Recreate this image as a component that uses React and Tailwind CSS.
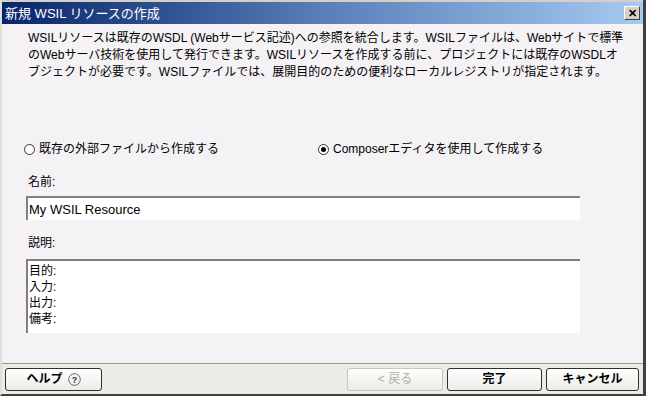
import React, { useState } from "react";

const jp = { fontFamily: '"Liberation Sans", "Noto Sans CJK JP", sans-serif' };

function Radio({ checked, label, onClick }) {
  return (
    <button onClick={onClick} className="flex items-center gap-[4px] text-[12px] text-black">
      <span className="w-[11px] h-[11px] rounded-full border border-[#333] bg-white flex items-center justify-center">
        {checked && <span className="w-[5px] h-[5px] rounded-full bg-black" />}
      </span>
      <span>{label}</span>
    </button>
  );
}

function Btn({ children, disabled, className = "" }) {
  return (
    <button
      disabled={disabled}
      className={`h-[23px] rounded-[3px] border text-[12px] font-bold bg-gradient-to-b from-white to-[#ecebe6] flex items-center justify-center gap-[5px] ${
        disabled ? "border-[#c9c7ba] text-[#b0ae9f]" : "border-[#30302e] text-black"
      } ${className}`}
    >
      {children}
    </button>
  );
}

export default function App() {
  const [mode, setMode] = useState("composer");
  const [name, setName] = useState("My WSIL Resource");
  const [desc, setDesc] = useState("目的:\n入力:\n出力:\n備考:");

  return (
    <div style={jp} className="w-[646px] h-[396px] flex flex-col bg-[#d4d0c8] border-l-[2px] border-[#e0ded8] border-r-[3px] border-r-[#404040] border-b-[2px] border-b-[#404040] overflow-hidden">
      <div className="h-[22px] mt-[2px] flex items-center justify-between pl-[3px] pr-[3px] bg-gradient-to-r from-[#0a246a] via-[#5a7eb8] to-[#a6caf0]">
        <span className="text-white text-[13px] leading-none">新規 WSIL リソースの作成</span>
        <span className="w-[16px] h-[14px] bg-[#d4d0c8] border border-t-white border-l-white border-r-[#404040] border-b-[#404040] flex items-center justify-center text-[11px] font-bold leading-none">
          ✕
        </span>
      </div>

      <div className="flex-1 bg-[#f4f2f5] flex flex-col pl-[24px] pr-[64px]">
        <p className="mt-[6px] ml-[2px] text-[12px] leading-[17px] text-black w-[600px]">
          WSILリソースは既存のWSDL (Webサービス記述)への参照を統合します。WSILファイルは、Webサイトで標準
          <br />
          のWebサーバ技術を使用して発行できます。WSILリソースを作成する前に、プロジェクトには既存のWSDLオ
          <br />
          ブジェクトが必要です。WSILファイルでは、展開目的のための便利なローカルレジストリが指定されます。
        </p>

        <div className="mt-[59px] -ml-[2px] flex">
          <div className="w-[294px]">
            <Radio checked={mode === "file"} label="既存の外部ファイルから作成する" onClick={() => setMode("file")} />
          </div>
          <Radio checked={mode === "composer"} label="Composerエディタを使用して作成する" onClick={() => setMode("composer")} />
        </div>

        <label className="mt-[15px] ml-[2px] text-[12px] text-black">名前:</label>
        <input
          value={name}
          onChange={(e) => setName(e.target.value)}
          className="mt-[5px] w-[554px] h-[24px] bg-white border-t-[2px] border-l-[2px] border-t-[#808080] border-l-[#808080] px-[1px] text-[13px] text-black outline-none"
        />

        <label className="mt-[14px] ml-[2px] text-[12px] text-black">説明:</label>
        <textarea
          value={desc}
          onChange={(e) => setDesc(e.target.value)}
          className="mt-[7px] w-[554px] h-[74px] bg-white border-t-[2px] border-l-[2px] border-t-[#808080] border-l-[#808080] px-[1px] pt-[2px] text-[12px] leading-[16px] text-black outline-none resize-none"
        />
      </div>

      <div className="h-[31px] bg-[#ecebe6] border-t border-[#9a9890] flex items-center pl-[3px] pr-[4px]">
        <Btn className="w-[97px]">
          ヘルプ
          <svg width="13" height="13" viewBox="0 0 13 13">
            <circle cx="6.5" cy="6.5" r="5.8" fill="none" stroke="#555" strokeWidth="0.9" />
            <text x="6.5" y="10" textAnchor="middle" fontSize="9" fill="#333" fontFamily="Liberation Sans, sans-serif">?</text>
          </svg>
        </Btn>
        <div className="flex-1" />
        <Btn disabled className="w-[96px] font-normal">&lt; 戻る</Btn>
        <Btn className="w-[95px] ml-[4px]">完了</Btn>
        <Btn className="w-[93px] ml-[4px]">キャンセル</Btn>
      </div>
    </div>
  );
}
